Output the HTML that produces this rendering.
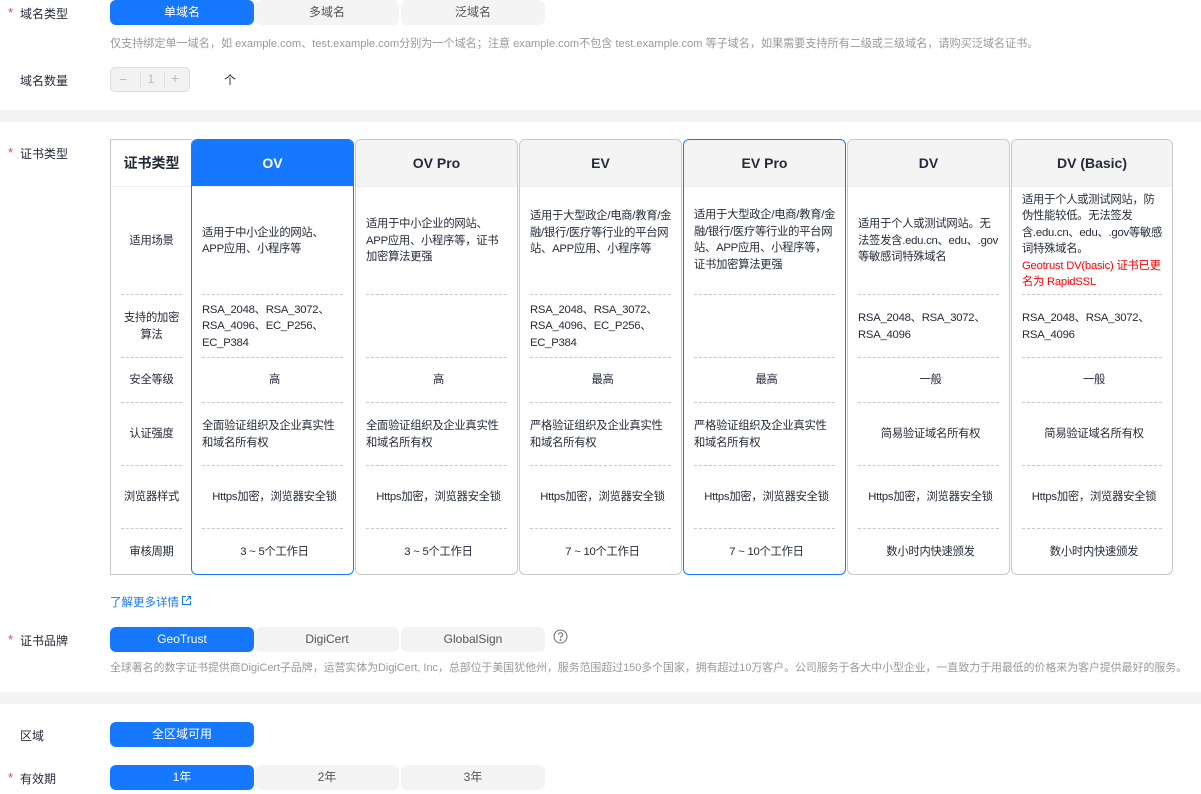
<!DOCTYPE html>
<html><head><meta charset="utf-8"><style>
*{box-sizing:border-box;margin:0;padding:0}
body{width:1201px;height:794px;background:#fff;font-family:"Liberation Sans","Noto Sans CJK SC",sans-serif;font-size:12px;color:#252b3a;position:relative;overflow:hidden}
.a{position:absolute}
.lbl{position:absolute;left:20px;font-size:12px;color:#252b3a}
.star{position:absolute;left:8px;color:#e5484d;font-size:13px}
.seg{position:absolute;height:25px;width:144px;border-radius:6px;background:#f4f4f4;color:#555;text-align:center;line-height:25px;font-size:12px}
.seg.on{background:#1677ff;color:#fff}
.hint{position:absolute;left:110px;color:#999;font-size:11.1px;white-space:nowrap}
.band{position:absolute;left:0;width:1201px;background:#f4f4f5}
.col{position:absolute;top:139px;height:436px;border:1px solid #c8c8c8;border-radius:6px;overflow:hidden;background:#fff;width:163px}
.col.sel{border-color:#1677ff}
.col .h{height:47px;background:#f4f4f4;text-align:center;line-height:46px;font-weight:bold;font-size:14px;color:#252b3a;border-bottom:1px solid #eee}
.col.ov .h{background:#1677ff;color:#fff}
.r{position:relative;display:flex;align-items:center;padding:0 6px 0 10px;line-height:16.5px;font-size:11.3px;letter-spacing:-0.25px;line-break:anywhere}
.r.c{justify-content:center;text-align:center}
.r.d::after{content:"";position:absolute;left:10px;right:10px;bottom:0;border-bottom:1px dashed #c8c8c8}
.h1{height:108px}.h2{height:63px}.h3{height:45px}.h4{height:63px}.h5{height:63px}.h6{height:46px}
.lc{position:absolute;left:110px;top:139px;width:82px;height:436px;border:1px solid #c8c8c8;border-right:none;background:#fff}
.lc .h{height:47px;text-align:center;line-height:46px;font-weight:bold;font-size:14px;border-bottom:1px solid #eee}
.lc .r{padding:0 9px;justify-content:center;text-align:center}
.nb{white-space:nowrap}
</style></head><body>
<span class="star" style="top:5px">*</span><span class="lbl" style="top:5px">域名类型</span>
<div class="seg on" style="left:110px;top:0">单域名</div>
<div class="seg" style="left:255px;top:0">多域名</div>
<div class="seg" style="left:401px;top:0">泛域名</div>
<div class="hint" style="top:35px">仅支持绑定单一域名，如 example.com、test.example.com分别为一个域名；注意 example.com不包含 test.example.com 等子域名，如果需要支持所有二级或三级域名，请购买泛域名证书。</div>
<span class="lbl" style="top:72px">域名数量</span>
<div class="a" style="left:110px;top:67px;width:80px;height:25px;border:1px solid #ddd;border-radius:5px;background:#f2f2f2;color:#bbb;font-size:14px">
<span class="a" style="left:8px;top:3px">−</span><span class="a" style="left:29px;top:5px;height:14px;border-left:1px solid #ddd"></span><span class="a" style="left:33px;top:4px;font-size:12px;width:14px;text-align:center">1</span><span class="a" style="left:53px;top:5px;height:14px;border-left:1px solid #ddd"></span><span class="a" style="left:60px;top:2px">+</span></div>
<span class="a" style="left:224px;top:71px">个</span>
<div class="band" style="top:110px;height:12px"></div>

<span class="star" style="top:145px">*</span><span class="lbl" style="top:145px">证书类型</span>
<div class="lc"><div class="h">证书类型</div>
<div class="r h1 d">适用场景</div><div class="r h2 d">支持的加密算法</div><div class="r h3 d">安全等级</div><div class="r h4 d">认证强度</div><div class="r h5 d">浏览器样式</div><div class="r h6">审核周期</div></div>

<div class="col sel ov" style="left:191px"><div class="h">OV</div>
<div class="r h1 d"><div>适用于中小企业的网站、<br><span class="nb">APP应用</span>、小程序等</div></div>
<div class="r h2 d"><div>RSA_2048、RSA_3072、<br>RSA_4096、EC_P256、<br>EC_P384</div></div>
<div class="r h3 d c">高</div>
<div class="r h4 d"><div>全面验证组织及企业真实性<br>和域名所有权</div></div>
<div class="r h5 d c">Https加密，浏览器安全锁</div>
<div class="r h6 c">3 ~ 5个工作日</div></div>

<div class="col" style="left:355px"><div class="h">OV Pro</div>
<div class="r h1 d"><div>适用于中小企业的网站、<br><span class="nb">APP应用</span>、小程序等，证书<br>加密算法更强</div></div>
<div class="r h2 d"></div>
<div class="r h3 d c">高</div>
<div class="r h4 d"><div>全面验证组织及企业真实性<br>和域名所有权</div></div>
<div class="r h5 d c">Https加密，浏览器安全锁</div>
<div class="r h6 c">3 ~ 5个工作日</div></div>

<div class="col" style="left:519px"><div class="h">EV</div>
<div class="r h1 d" style="align-items:flex-start;padding-top:21px"><div>适用于大型政企/电商/教育/金<br>融/银行/医疗等行业的平台网<br>站、<span class="nb">APP应用</span>、小程序等</div></div>
<div class="r h2 d"><div>RSA_2048、RSA_3072、<br>RSA_4096、EC_P256、<br>EC_P384</div></div>
<div class="r h3 d c">最高</div>
<div class="r h4 d"><div>严格验证组织及企业真实性<br>和域名所有权</div></div>
<div class="r h5 d c">Https加密，浏览器安全锁</div>
<div class="r h6 c">7 ~ 10个工作日</div></div>

<div class="col sel" style="left:683px"><div class="h">EV Pro</div>
<div class="r h1 d" style="align-items:flex-start;padding-top:20px"><div>适用于大型政企/电商/教育/金<br>融/银行/医疗等行业的平台网<br>站、<span class="nb">APP应用</span>、小程序等，<br>证书加密算法更强</div></div>
<div class="r h2 d"></div>
<div class="r h3 d c">最高</div>
<div class="r h4 d"><div>严格验证组织及企业真实性<br>和域名所有权</div></div>
<div class="r h5 d c">Https加密，浏览器安全锁</div>
<div class="r h6 c">7 ~ 10个工作日</div></div>

<div class="col" style="left:847px"><div class="h">DV</div>
<div class="r h1 d"><div>适用于个人或测试网站。无<br>法签发含.edu.cn、edu、.gov<br>等敏感词特殊域名</div></div>
<div class="r h2 d"><div>RSA_2048、RSA_3072、<br>RSA_4096</div></div>
<div class="r h3 d c">一般</div>
<div class="r h4 d c">简易验证域名所有权</div>
<div class="r h5 d c">Https加密，浏览器安全锁</div>
<div class="r h6 c">数小时内快速颁发</div></div>

<div class="col" style="left:1011px;width:162px"><div class="h">DV (Basic)</div>
<div class="r h1 d"><div>适用于个人或测试网站，防<br>伪性能较低。无法签发<br>含.edu.cn、edu、.gov等敏感<br>词特殊域名。<br><span style="color:#f00">Geotrust DV(basic) 证书已更<br>名为 RapidSSL</span></div></div>
<div class="r h2 d"><div>RSA_2048、RSA_3072、<br>RSA_4096</div></div>
<div class="r h3 d c">一般</div>
<div class="r h4 d c">简易验证域名所有权</div>
<div class="r h5 d c">Https加密，浏览器安全锁</div>
<div class="r h6 c">数小时内快速颁发</div></div>

<span class="a" style="left:110px;top:594px;color:#1677ff;font-size:11.5px">了解更多详情</span>
<svg class="a" style="left:181px;top:595px" width="11" height="11" viewBox="0 0 11 11" fill="none" stroke="#1677ff" stroke-width="1.1"><path d="M5 1.5H1.5v8h8V6M6.5 1.5h3v3M9.5 1.5L5 6"/></svg>

<span class="star" style="top:632px">*</span><span class="lbl" style="top:632px">证书品牌</span>
<div class="seg on" style="left:110px;top:627px">GeoTrust</div>
<div class="seg" style="left:255px;top:627px">DigiCert</div>
<div class="seg" style="left:401px;top:627px">GlobalSign</div>
<svg class="a" style="left:553px;top:629px" width="15" height="15" viewBox="0 0 15 15" fill="none" stroke="#777" stroke-width="1.1"><circle cx="7.5" cy="7.5" r="6.5"/><path d="M5.5 5.8a2 2 0 1 1 2.6 1.9c-.5.2-.6.5-.6 1V9.3"/><circle cx="7.5" cy="11" r=".5" fill="#777"/></svg>
<div class="hint" style="top:659px;font-size:10.9px">全球著名的数字证书提供商DigiCert子品牌，运营实体为DigiCert, Inc，总部位于美国犹他州，服务范围超过150多个国家，拥有超过10万客户。公司服务于各大中小型企业，一直致力于用最低的价格来为客户提供最好的服务。</div>
<div class="band" style="top:692px;height:12px"></div>

<span class="lbl" style="top:727px">区域</span>
<div class="seg on" style="left:110px;top:722px">全区域可用</div>
<span class="star" style="top:770px">*</span><span class="lbl" style="top:770px">有效期</span>
<div class="seg on" style="left:110px;top:765px">1年</div>
<div class="seg" style="left:255px;top:765px">2年</div>
<div class="seg" style="left:401px;top:765px">3年</div>
</body></html>
